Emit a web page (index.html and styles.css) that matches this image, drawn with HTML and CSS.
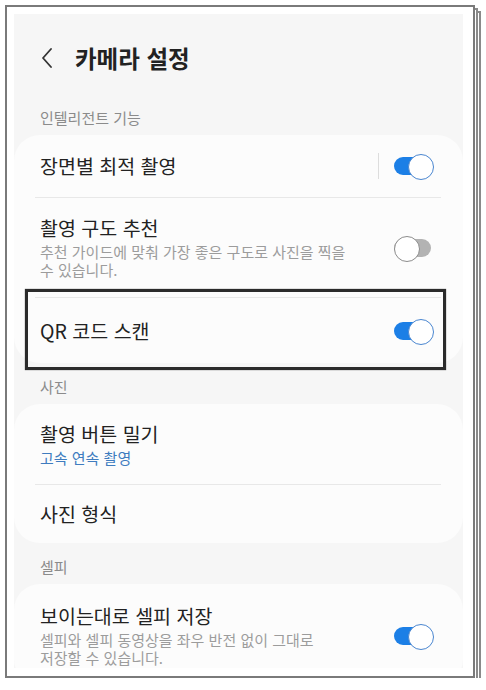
FILE: index.html
```html
<!DOCTYPE html>
<html lang="ko">
<head>
<meta charset="utf-8">
<title>카메라 설정</title>
<link rel="stylesheet" href="styles.css">
</head>
<body>
<div class="paper">
  <div class="screen">
    <header class="appbar">
      <svg class="back" width="12" height="20" viewBox="0 0 12 20" aria-hidden="true"><polyline points="10,1 2,10 10,19" fill="none" stroke="#333" stroke-width="1.8" stroke-linecap="round" stroke-linejoin="round"/></svg>
      <h1 class="page-title">카메라 설정</h1>
    </header>

    <div class="group-label">인텔리전트 기능</div>
    <section class="card">
      <div class="row row-single">
        <div class="text"><div class="title">장면별 최적 촬영</div></div>
        <span class="vsep"></span>
        <span class="switch on"></span>
      </div>
      <hr class="divider">
      <div class="row row-multi">
        <div class="text">
          <div class="title">촬영 구도 추천</div>
          <div class="sub">추천 가이드에 맞춰 가장 좋은 구도로 사진을 찍을 수 있습니다.</div>
        </div>
        <span class="switch"></span>
      </div>
      <hr class="divider">
      <div class="row row-last">
        <div class="text"><div class="title">QR 코드 스캔</div></div>
        <span class="switch on"></span>
      </div>
    </section>

    <div class="group-label">사진</div>
    <section class="card">
      <div class="row row-value">
        <div class="text">
          <div class="title">촬영 버튼 밀기</div>
          <div class="value">고속 연속 촬영</div>
        </div>
      </div>
      <hr class="divider">
      <div class="row row-format">
        <div class="text"><div class="title">사진 형식</div></div>
      </div>
    </section>

    <div class="group-label">셀피</div>
    <section class="card">
      <div class="row row-selfie">
        <div class="text">
          <div class="title">보이는대로 셀피 저장</div>
          <div class="sub">셀피와 셀피 동영상을 좌우 반전 없이 그대로 저장할 수 있습니다.</div>
        </div>
        <span class="switch on"></span>
      </div>
    </section>

    <div class="highlight"></div>
  </div>
</div>
</body>
</html>
```

FILE: styles.css
```css
* { box-sizing: border-box; }

html, body {
  margin: 0;
  padding: 0;
  background: #ffffff;
}

body {
  font-family: "Noto Sans CJK KR", "Noto Sans", sans-serif;
  padding: 5px 0 0 5px;
}

.paper {
  width: 470px;
  height: 673px;
  background: #ffffff;
  border: 2px solid #7a7a7a;
  padding: 7px 10px 8px 7px;
  box-shadow:
    3px 3px 0 -2px #ffffff,
    3px 3px 0 0 #8a8a8a,
    6px 6px 0 -2px #ffffff,
    6px 6px 0 0 #8a8a8a;
}

.screen {
  position: relative;
  width: 449px;
  height: 654px;
  background: #f6f6f6;
  overflow: hidden;
}

.appbar {
  height: 80px;
  padding: 8px 0 0 27px;
  display: flex;
  align-items: center;
  gap: 22px;
}

.back { display: block; flex-shrink: 0; }

.page-title {
  margin: 0;
  font-size: 23.5px;
  font-weight: 700;
  color: #222222;
  line-height: 30px;
}

.group-label {
  padding: 15px 26px 8px;
  font-size: 15px;
  line-height: 18px;
  color: #8b8b8b;
}

.card {
  background: #fcfcfc;
  border-radius: 26px;
}

.row {
  display: flex;
  align-items: center;
  padding: 0 29px 0 26px;
}

.row-single { min-height: 62px; }
.row-multi { padding-top: 18px; padding-bottom: 18px; }
.row-last { min-height: 65px; }
.row-value { min-height: 80px; }
.row-format { min-height: 58px; }
.row-selfie { padding-top: 20px; padding-bottom: 18px; }

.text { flex: 1; min-width: 0; }

.title {
  font-size: 19.5px;
  line-height: 24px;
  color: #222222;
}

.sub {
  margin-top: 3px;
  font-size: 15px;
  line-height: 18px;
  color: #9c9c9c;
  max-width: 314px;
  word-break: keep-all;
}

.value {
  margin-top: 3px;
  font-size: 15px;
  line-height: 18px;
  color: #3f7cbf;
}

.divider {
  margin: 0 22px 0 21px;
  border: 0;
  border-top: 1px solid #e8e8e8;
  height: 0;
}

.vsep {
  width: 1px;
  height: 26px;
  background: #dddddd;
  margin-right: 15px;
  flex-shrink: 0;
}

.switch {
  position: relative;
  width: 40px;
  height: 24px;
  flex-shrink: 0;
}

.switch::before {
  content: "";
  position: absolute;
  left: 0;
  top: 3px;
  width: 37px;
  height: 18px;
  border-radius: 9px;
  background: #b3b3b3;
}

.switch::after {
  content: "";
  position: absolute;
  left: 0;
  top: 0;
  width: 24px;
  height: 24px;
  border-radius: 50%;
  background: #ffffff;
  border: 1.5px solid #8c8c8c;
}

.switch.on::before { background: #1c7fe6; }

.switch.on::after {
  left: auto;
  right: 0;
  border-color: #4a86d0;
}

.highlight {
  position: absolute;
  left: 11px;
  top: 275px;
  width: 421px;
  height: 81px;
  border: 3px solid #2b2b2b;
  box-shadow: 0 0 1px #555555;
  pointer-events: none;
}
```
